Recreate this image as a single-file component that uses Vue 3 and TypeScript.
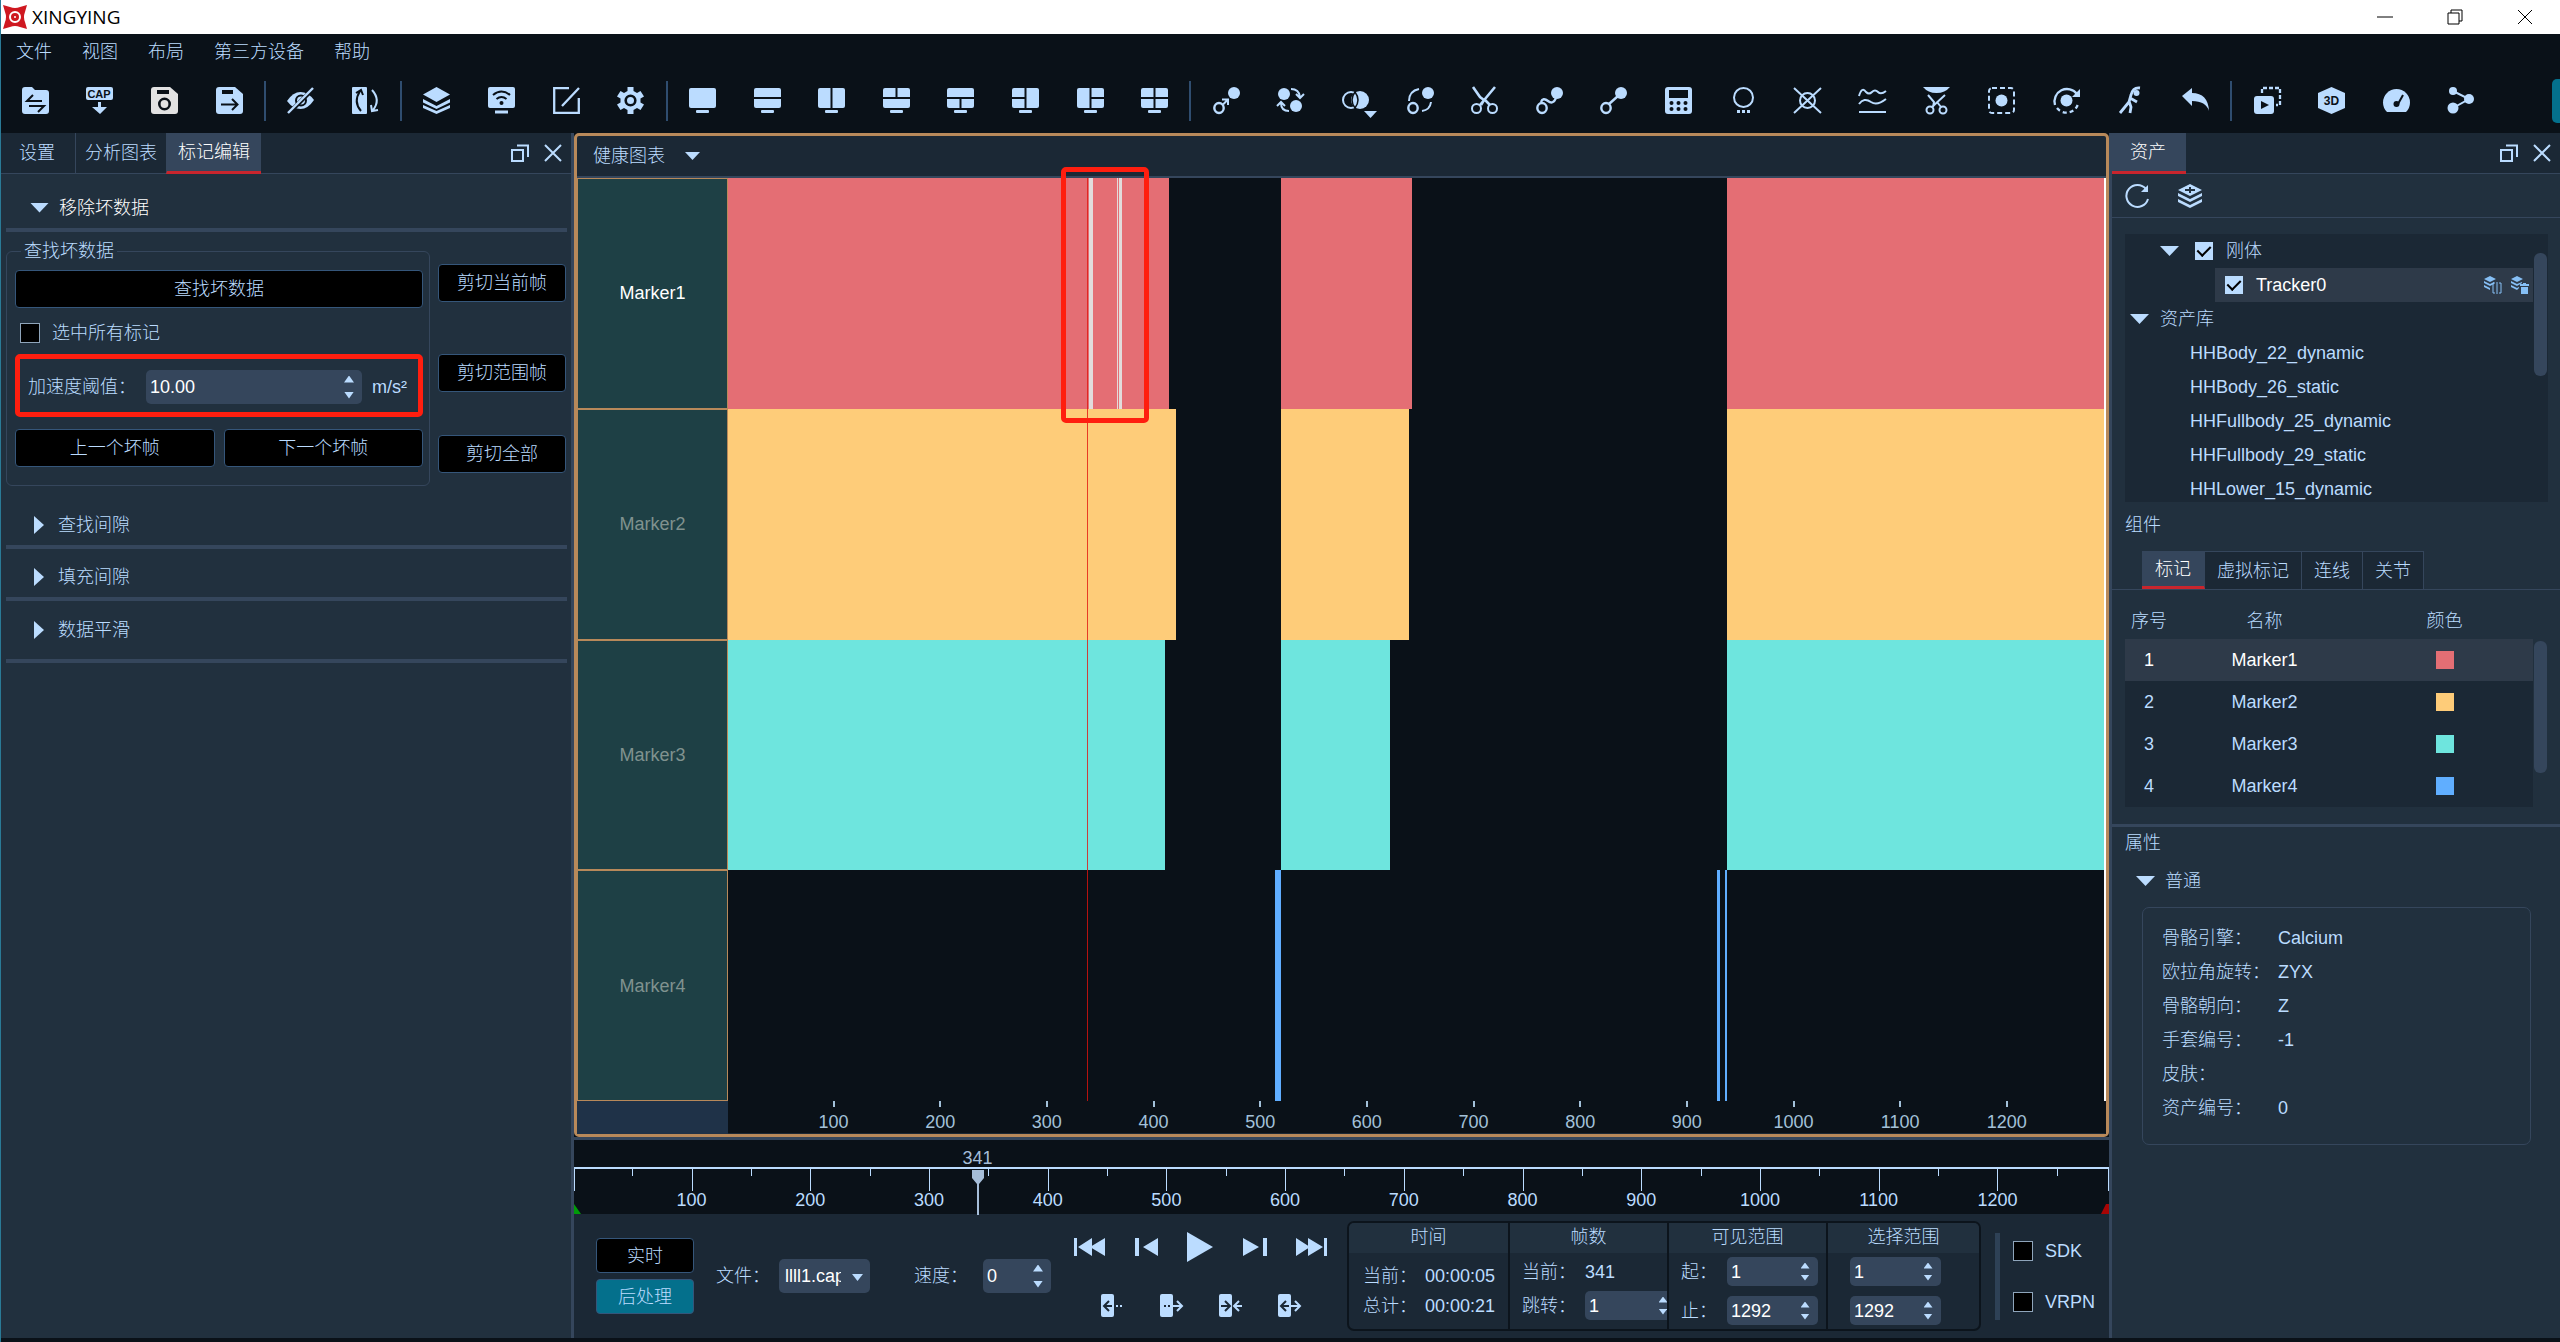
<script setup lang="ts">
import { ref } from 'vue'

interface Icon { name: string; art: string; muted?: boolean }
interface Track { name: string; color: string; spans: [number, number][]; bad?: [number, number][] }

const D = '#0a1118'
const line = 'fill="none" stroke="currentColor" stroke-width="2"'
const dark = `fill="none" stroke="${D}" stroke-width="2"`
const stand = '<rect x="7" y="23" width="13" height="3" rx="1"/>'
const screen = (cuts: string) =>
  `<rect y="1" width="27" height="20" rx="2"/><path d="${cuts}" ${dark}/>${stand}`
const ringAndDot = `<ellipse cx="6" cy="21" rx="4.700" ry="5" fill="none" stroke="currentColor" stroke-width="2.400"/><circle cx="21" cy="6" r="6"/>`

const menus = ['文件', '视图', '布局', '第三方设备', '帮助']

const toolGroups: Icon[][] = [
  [
    { name: '打开', art: `<path d="M0 3q0-3 3-3h7l3 3h11q3 0 3 3v18q0 3-3 3H3q-3 0-3-3z"/><path d="M11 8L5 14h15M7 19h15l-6 6" ${dark}/>` },
    { name: '采集', art: `<rect width="27" height="13" rx="2"/><text x="13" y="11" text-anchor="middle" font-size="11" font-weight="700" font-family="Liberation Sans, sans-serif" fill="${D}">CAP</text><path d="M12 15h3v5h6l-7 7-8-7h6z"/>` },
    { name: '保存', muted: true, art: `<path d="M3 0h16l8 7v17q0 3-3 3H3q-3 0-3-3V3q0-3 3-3z"/><path d="M6 3h12v4H6z" fill="${D}"/><circle cx="13.500" cy="17" r="5.200" fill="none" stroke="${D}" stroke-width="2.600"/>` },
    { name: '另存为', art: `<path d="M3 0h16l8 7v17q0 3-3 3H3q-3 0-3-3V3q0-3 3-3z"/><path d="M6 3h11v4H6z" fill="${D}"/><path d="M5 17.500h16M16 12l5.500 5.500L16 23" ${dark}/>` },
  ],
  [
    { name: '隐藏', art: `<path d="M0 14Q6 5 13.500 5T27 13Q21 22 13.500 22T0 14z"/><circle cx="14" cy="13.500" r="5" ${dark}/><path d="M0 25L25 0l3 3L3 28z" fill="${D}"/><path d="M1 26L26 1" fill="none" stroke="currentColor" stroke-width="2.400"/>` },
    { name: '镜像', art: `<rect width="15" height="27" rx="1"/><path d="M9 24Q1 15 8 4M4 6l5-3 2 5" ${dark}/><path d="M20 3q9 10 1 20M26 23l-6 1-1-6" ${line}/>` },
  ],
  [
    { name: '图层', art: '<path d="M13.500 0L27 7.500 13.500 15 0 7.500z"/><path d="M0 12l13.500 7L27 12v3.500L13.500 22 0 15.500z"/><path d="M0 18l13.500 6L27 18v3L13.500 27 0 21z"/>' },
    { name: '投屏', art: `<rect width="27" height="21" rx="2"/><path d="M5 8q8.500-7 17 0M8.500 12q5-4 10 0" ${dark}/><circle cx="13.500" cy="16" r="2" fill="${D}"/><rect x="7" y="23.500" width="13" height="3"/>` },
    { name: '编辑', art: `<path d="M16 1.200H1.200v24.600h24.600V11M26 1L9 19" fill="none" stroke="currentColor" stroke-width="2.300"/>` },
    { name: '设置', art: `<path d="M10.500 0h6v4l3.500 2 3.500-2 3.500 5.500-3.500 2v4l3.500 2-3.500 5.500-3.500-2-3.500 2v4h-6v-4L7 21l-3.500 2L0 17.500l3.500-2v-4L0 9.500 3.500 4 7 6l3.500-2z"/><circle cx="13.500" cy="13.500" r="4.800" fill="none" stroke="${D}" stroke-width="2.600"/>` },
  ],
  [
    { name: '单窗口', art: screen('') },
    { name: '上下', art: screen('M0 11h27') },
    { name: '左右', art: screen('M13.500 0v22') },
    { name: '上二下一', art: screen('M0 11h27M13.500 0v11') },
    { name: '上一下二', art: screen('M0 11h27M13.500 11v11') },
    { name: '左二右一', art: screen('M13.500 0v22M0 11h13.500') },
    { name: '左一右二', art: screen('M13.500 0v22M13.500 11H27') },
    { name: '四窗口', art: screen('M13.500 0v22M0 11h27') },
  ],
  [
    { name: '识别', art: `${ringAndDot}<path d="M9 12.500h6V18M10 17.500l5-5" ${line}/>` },
    { name: '交换', art: `<circle cx="7" cy="7" r="6"/><circle cx="19" cy="19" r="6"/><path d="M14 2q8 0 9 8M19 7l4 4 4-4M12 24q-8 0-8-8M0 19l4-4 4 4" ${line}/>` },
    { name: '合并', art: `<circle cx="9" cy="13" r="8" ${line}/><circle cx="18" cy="13" r="9"/><path d="M13 5q6 8 0 16q-6-8 0-16z" fill="currentColor" stroke="${D}" stroke-width="1.500"/><path d="M22 24h13l-6.500 7z"/>` },
    { name: '连接', art: `${ringAndDot}<path d="M2 14Q2 4 12 2M24 15q-1 8-9 9" ${line}/>` },
    { name: '剪切', art: `<circle cx="5.500" cy="21.500" r="4.500" ${line}/><circle cx="21.500" cy="21.500" r="4.500" ${line}/><path d="M2 0l7 10 4 3-3 5M24 0L9 18M14 13l5 5" fill="none" stroke="currentColor" stroke-width="2.600"/>` },
    { name: '曲线', art: `${ringAndDot}<path d="M5 15q2-5 7-1q5 4 8-3" fill="none" stroke="currentColor" stroke-width="2.400"/>` },
    { name: '直线', art: `${ringAndDot}<path d="M9 17l9-8" fill="none" stroke="currentColor" stroke-width="2.400"/>` },
    { name: '计算', art: `<rect width="27" height="27" rx="3"/><path d="M4 3h19v8H4z" fill="${D}"/><g fill="${D}"><circle cx="6.500" cy="16" r="2"/><circle cx="13.500" cy="16" r="2"/><circle cx="20.500" cy="16" r="2"/><circle cx="6.500" cy="22" r="2"/><circle cx="13.500" cy="22" r="2"/><circle cx="20.500" cy="22" r="2"/></g>` },
    { name: '预测', art: `<circle cx="13.500" cy="10.500" r="9.500" ${line}/><path d="M7 23h3v3H7zM12 23h3v3h-3zM17 23h3v3h-3z"/>` },
    { name: '删除', art: `<circle cx="13.500" cy="13.500" r="7.500" ${line}/><path d="M0 1l27 25M27 1L0 26" ${line}/>` },
    { name: '平滑', art: `<path d="M0 9Q3-1 7 5q3 3 6 0t6 0 8-1M0 17q5-7 12-2q6 4 15-3M0 25h27" ${line}/>` },
    { name: '裁剪', art: `<path d="M0 0h27q-5 6-13.500 6T0 0z"/><circle cx="7" cy="23" r="3.500" ${line}/><circle cx="20" cy="23" r="3.500" ${line}/><path d="M5 8l6 7-1 5M22 8L9 20M14 15l4 5" ${line}/>` },
    { name: '框选', art: `<rect x="1" y="1" width="25" height="25" rx="3" fill="none" stroke="currentColor" stroke-width="2" stroke-dasharray="5 3"/><circle cx="13.500" cy="13.500" r="6"/>` },
    { name: '旋转', art: `<circle cx="13.500" cy="13.500" r="6"/><path d="M2 18A12.500 12.500 0 0 1 24 7" fill="none" stroke="currentColor" stroke-width="2.300"/><path d="M27 2v8h-8z"/><path d="M4 21a12 12 0 0 0 21-4" fill="none" stroke="currentColor" stroke-width="2.300" stroke-dasharray="4 3"/>` },
    { name: '人体', art: `<circle cx="19.500" cy="6" r="3"/><path d="M23 1q-7-1-9 7l-2 7-9 11M12 14l2 6-1 6M13 11l7 4" fill="none" stroke="currentColor" stroke-width="2.800"/>` },
    { name: '撤销', art: '<path d="M0 9l10-8v5q16 0 17 18q-3-10-17-10v5z"/>' },
  ],
  [
    { name: '复制播放', art: `<rect y="9" width="20" height="18" rx="3"/><path d="M7 14l8 4-8 4z" fill="${D}"/><path d="M8 6V1h18v17h-4" fill="none" stroke="currentColor" stroke-width="2.300" stroke-dasharray="4 2"/>` },
    { name: '三维', art: `<path d="M13.500 0L27 6v15l-13.500 6L0 21V6z"/><text x="13.500" y="18" text-anchor="middle" font-size="12" font-weight="700" font-family="Liberation Sans, sans-serif" fill="${D}">3D</text>` },
    { name: '仪表', art: `<path d="M4 25a13.500 13.500 0 1 1 19 0z"/><path d="M20 8l-5 9" fill="none" stroke="${D}" stroke-width="2"/><circle cx="13.500" cy="17" r="3" fill="${D}"/>` },
    { name: '节点', art: `<circle cx="6" cy="4" r="4"/><circle cx="22" cy="12" r="5"/><circle cx="6" cy="21" r="5.500"/><path d="M6 4l16 8L6 21" ${line}/>` },
  ],
]

const tracks: Track[] = [
  { name: 'Marker1', color: '#e46e74', spans: [[2, 415], [520, 643], [939, 1292]], bad: [[340, 344], [367, 368], [369, 371]] },
  { name: 'Marker2', color: '#fecc79', spans: [[2, 422], [520, 640], [939, 1292]] },
  { name: 'Marker3', color: '#6ee5de', spans: [[2, 412], [520, 623], [939, 1292]] },
  { name: 'Marker4', color: '#60aeff', spans: [[515, 520], [929, 932], [937, 939]] },
]
const hundreds = Array.from({ length: 12 }, (_, i) => (i + 1) * 100)
const fifties = Array.from({ length: 13 }, (_, i) => i * 100 + 50)
const plotX = (f: number) => `${((f - 2) / 1290) * 100}%`
const plotSpan = (a: number, b: number) => ({ left: plotX(a), width: `${((b - a) / 1290) * 100}%` })
const timeX = (f: number) => ({ left: `${((f - 1) / 1293) * 100}%` })

const library = ['HHBody_22_dynamic', 'HHBody_26_static', 'HHFullbody_25_dynamic', 'HHFullbody_29_static', 'HHLower_15_dynamic']
const partTabs = ['标记', '虚拟标记', '连线', '关节']
const properties = [
  ['骨骼引擎：', 'Calcium'], ['欧拉角旋转：', 'ZYX'], ['骨骼朝向：', 'Z'],
  ['手套编号：', '-1'], ['皮肤：', ''], ['资产编号：', '0'],
]
const transport = [
  { name: '首帧', w: 31, art: '<path d="M0 0h3v18H0zM18 0v18L4 9zM31 0v18L16 9z"/>' },
  { name: '上一帧', w: 23, art: '<path d="M0 0h4v18H0zM23 0v18L8 9z"/>' },
  { name: '播放', w: 26, art: '<path d="M0-6l26 15L0 24z"/>' },
  { name: '下一帧', w: 24, art: '<path d="M0 0v18L16 9zM20 0h4v18h-4z"/>' },
  { name: '末帧', w: 31, art: '<path d="M0 0v18L14 9zM12 0v18L27 9zM28 0h3v18h-3z"/>' },
]
const half = '<rect width="13" height="23" rx="2"/>'
const ink = 'fill="none" stroke="#1b2835" stroke-width="2"'
const trims = [
  { name: '向前选择', art: `${half}<path d="M11 12H3M8 7l-5 5 5 5" ${ink}/><path d="M15 11h2v2h-2zM19 11h2v2h-2z"/>` },
  { name: '向后选择', art: `${half}<path d="M4 11h2v2H4zM8 11h2v2H8z" fill="#1b2835"/><path d="M13 12h8M17 7l5 5-5 5" ${line}/>` },
  { name: '向内收缩', art: `${half}<path d="M2 12h8M6 7l5 5-5 5" ${ink}/><path d="M23 12h-7M20 7l-5 5 5 5" ${line}/>` },
  { name: '向外扩展', art: `${half}<path d="M11 12H3M8 7l-5 5 5 5" ${ink}/><path d="M13 12h8M17 7l5 5-5 5" ${line}/>` },
]

const threshold = ref('10.00')
const file = ref('llll1.cap')
const speed = ref(0)
const jump = ref(1)
const visible = ref([1, 1292])
const selected = ref([1, 1292])
</script>

<template>
  <div class="app">
    <header class="titlebar">
      <svg class="logo" viewBox="0 0 24 24">
        <path d="M0 0l7 2q5 2 10 0l7-2-2 7q-2 5 0 10l2 7-7-2q-5-2-10 0l-7 2 2-7q2-5 0-10z" fill="#cf1820" />
        <circle cx="12" cy="12" r="5" fill="none" stroke="#fff" stroke-width="2" />
        <circle cx="12" cy="12" r="1" fill="#fff" />
      </svg>
      <span class="app-name">XINGYING</span>
      <div class="win-buttons">
        <button aria-label="最小化"><svg viewBox="0 0 16 16"><path d="M0 8h16" /></svg></button>
        <button aria-label="还原"><svg viewBox="0 0 16 16"><path d="M1 4h11v11H1zM4 4V1h11v11h-3" /></svg></button>
        <button aria-label="关闭"><svg viewBox="0 0 16 16"><path d="M1 1l14 14M15 1L1 15" /></svg></button>
      </div>
    </header>

    <nav class="menubar">
      <button v-for="m in menus" :key="m">{{ m }}</button>
    </nav>

    <div class="toolbar">
      <template v-for="(g, gi) in toolGroups" :key="gi">
        <i v-if="gi" class="tool-sep"></i>
        <button v-for="t in g" :key="t.name" class="tool" :class="{ muted: t.muted }" :aria-label="t.name">
          <svg viewBox="0 0 27 27" v-html="t.art"></svg>
        </button>
      </template>
      <button class="side-handle" aria-label="展开"></button>
    </div>

    <main class="workspace">
      <section class="left">
        <div class="dock-head">
          <button class="tab first">设置</button>
          <button class="tab">分析图表</button>
          <button class="tab active">标记编辑</button>
          <div class="dock-actions">
            <button aria-label="浮动"><svg viewBox="0 0 18 18"><path d="M1 6h11v11H1zM6 1.500h11V13" /></svg></button>
            <button aria-label="关闭"><svg viewBox="0 0 18 18"><path d="M1 1l16 16M17 1L1 17" /></svg></button>
          </div>
        </div>

        <h3 class="fold open"><i class="tri down"></i>移除坏数据</h3>
        <div class="bad-data">
          <fieldset>
            <legend>查找坏数据</legend>
            <button class="btn">查找坏数据</button>
            <label class="check"><input type="checkbox" />选中所有标记</label>
            <div class="threshold">
              <label for="threshold">加速度阈值：</label>
              <span class="spin">
                <input id="threshold" v-model="threshold" type="text" inputmode="decimal" />
                <span class="steps"><button aria-label="增加"></button><button aria-label="减少"></button></span>
              </span>
              <span class="unit">m/s²</span>
            </div>
            <div class="pair">
              <button class="btn">上一个坏帧</button>
              <button class="btn">下一个坏帧</button>
            </div>
          </fieldset>
          <div class="cuts">
            <button class="btn">剪切当前帧</button>
            <button class="btn">剪切范围帧</button>
            <button class="btn">剪切全部</button>
          </div>
        </div>
        <h3 class="fold gaps"><i class="tri right-tri"></i>查找间隙</h3>
        <h3 class="fold fill"><i class="tri right-tri"></i>填充间隙</h3>
        <h3 class="fold smooth"><i class="tri right-tri"></i>数据平滑</h3>
      </section>

      <section class="center">
        <div class="frame">
          <button class="chart-head">健康图表<i class="tri small"></i></button>
          <div class="chart">
            <div class="names">
              <div v-for="(t, i) in tracks" :key="t.name" class="name" :class="{ on: i === 0 }">{{ t.name }}</div>
            </div>
            <div class="plot">
              <div v-for="t in tracks" :key="t.name" class="lane">
                <i v-for="s in t.spans" :key="s[0]" class="span" :style="{ ...plotSpan(s[0], s[1]), background: t.color }"></i>
                <i v-for="b in t.bad" :key="b[0]" class="span bad" :style="plotSpan(b[0], b[1])"></i>
              </div>
              <i class="cursor" :style="{ left: plotX(339) }"></i>
              <i class="callout"></i>
            </div>
            <div class="axis-pad"></div>
            <div class="axis">
              <span v-for="n in hundreds" :key="n" :style="{ left: plotX(n) }">{{ n }}</span>
            </div>
          </div>
        </div>

        <div class="timeline">
          <div class="rule">
            <i class="tick major" :style="timeX(1)"></i>
            <i v-for="n in fifties" :key="n" class="tick" :style="timeX(n)"></i>
            <i v-for="n in hundreds" :key="n" class="tick major" :style="timeX(n)"></i>
            <i class="tick major" :style="timeX(1293)"></i>
            <span v-for="n in hundreds" :key="'n' + n" class="num" :style="timeX(n)">{{ n }}</span>
            <div class="playhead" :style="timeX(341)">
              <span>341</span>
              <svg viewBox="0 0 14 45"><path d="M1 0h12v8l-5 6v31H6V14L1 8z" /></svg>
            </div>
            <svg class="limit start" viewBox="0 0 8 10"><path d="M0 0l7 10H0z" fill="#009b08" /></svg>
            <svg class="limit end" viewBox="0 0 8 10"><path d="M8 0v10H0l5-10z" fill="#a80404" /></svg>
          </div>
        </div>

        <div class="controls">
          <div class="modes">
            <button class="btn">实时</button>
            <button class="btn teal">后处理</button>
          </div>
          <label for="file" class="lbl">文件：</label>
          <span class="pick">
            <select id="file" v-model="file"><option>llll1.cap</option></select>
            <i class="tri mini"></i>
          </span>
          <label for="speed" class="lbl speed">速度：</label>
          <span class="spin speed-spin">
            <input id="speed" v-model="speed" type="text" />
            <span class="steps"><button aria-label="增加"></button><button aria-label="减少"></button></span>
          </span>

          <div class="transport">
            <div class="play-row">
              <button v-for="t in transport" :key="t.name" :aria-label="t.name" :style="{ width: t.w + 'px' }">
                <svg :viewBox="`0 0 ${t.w} 18`" v-html="t.art"></svg>
              </button>
            </div>
            <div class="trim-row">
              <button v-for="t in trims" :key="t.name" :aria-label="t.name"><svg viewBox="0 0 22 23" v-html="t.art"></svg></button>
            </div>
          </div>

          <div class="ranges">
            <div class="range time">
              <h4>时间</h4>
              <div class="row"><span>当前：</span><output>00:00:05</output></div>
              <div class="row"><span>总计：</span><output>00:00:21</output></div>
            </div>
            <div class="range frames">
              <h4>帧数</h4>
              <div class="row"><span>当前：</span><output>341</output></div>
              <div class="row">
                <label for="jump">跳转：</label>
                <span class="spin"><input id="jump" v-model="jump" type="text" /><span class="steps"><button aria-label="增加"></button><button aria-label="减少"></button></span></span>
              </div>
            </div>
            <div class="range view">
              <h4>可见范围</h4>
              <div v-for="(n, i) in ['起：', '止：']" :key="n" class="row">
                <label :for="'vis' + i">{{ n }}</label>
                <span class="spin"><input :id="'vis' + i" v-model="visible[i]" type="text" /><span class="steps"><button aria-label="增加"></button><button aria-label="减少"></button></span></span>
              </div>
            </div>
            <div class="range pickrange">
              <h4>选择范围</h4>
              <div v-for="(n, i) in ['起', '止']" :key="n" class="row">
                <span class="spin"><input v-model="selected[i]" type="text" :aria-label="n" /><span class="steps"><button aria-label="增加"></button><button aria-label="减少"></button></span></span>
              </div>
            </div>
          </div>
          <i class="bar"></i>
          <div class="streams">
            <label class="check"><input type="checkbox" />SDK</label>
            <label class="check"><input type="checkbox" />VRPN</label>
          </div>
        </div>
      </section>

      <aside class="right">
        <div class="dock-head">
          <button class="tab active asset">资产</button>
          <div class="dock-actions">
            <button aria-label="浮动"><svg viewBox="0 0 18 18"><path d="M1 6h11v11H1zM6 1.500h11V13" /></svg></button>
            <button aria-label="关闭"><svg viewBox="0 0 18 18"><path d="M1 1l16 16M17 1L1 17" /></svg></button>
          </div>
        </div>
        <div class="asset-tools">
          <button aria-label="刷新">
            <svg viewBox="0 0 24 24"><path d="M21 5A11 11 0 1 0 23 15" fill="none" stroke="currentColor" stroke-width="2" /><path d="M23 1v7h-7z" /></svg>
          </button>
          <button aria-label="添加资产">
            <svg viewBox="0 0 24 24"><path d="M12 0l12 6-12 6L0 6zM0 9l12 6 12-6v3l-12 6L0 12zM0 15l12 6 12-6v3l-12 6-12-6z" /><path d="M12 3v6M7 6h10" stroke="#21303e" stroke-width="2" /></svg>
          </button>
        </div>

        <div class="tree">
          <ul>
            <li class="lv1"><i class="tri down"></i><label class="check"><input type="checkbox" checked />刚体</label></li>
            <li class="lv2">
              <label class="check"><input type="checkbox" checked />Tracker0</label>
              <span class="item-tools">
                <button aria-label="重命名"><svg viewBox="0 0 18 18"><path d="M6 0l6 3-6 3-6-3zM0 5l6 3 4-2v2l-4 2-6-3zM0 9l6 3v2l-6-3z" /><path d="M11 7H9v10h2M15 7h2v10h-2M13 6v12" fill="none" stroke="currentColor" /></svg></button>
                <button aria-label="删除"><svg viewBox="0 0 18 18"><path d="M6 0l6 3-6 3-6-3zM0 5l6 3 5-2v1l-5 3-6-3zM0 9l6 3 2-1v1l-2 2-6-3zM9 8h3V7h3v1h3v2H9zM10 11h7v7h-7z" /></svg></button>
              </span>
            </li>
            <li class="lv0"><i class="tri down"></i>资产库</li>
            <li v-for="n in library" :key="n" class="leaf">{{ n }}</li>
          </ul>
          <i class="thumb"></i>
        </div>

        <h3 class="cap">组件</h3>
        <div class="part-tabs">
          <button v-for="(t, i) in partTabs" :key="t" :class="{ active: i === 0 }">{{ t }}</button>
        </div>
        <div class="markers">
          <table>
            <thead><tr><th class="c1">序号</th><th class="c2">名称</th><th>颜色</th></tr></thead>
            <tbody>
              <tr v-for="(t, i) in tracks" :key="t.name" :class="{ on: i === 0 }">
                <td>{{ i + 1 }}</td><td>{{ t.name }}</td><td><i class="swatch" :style="{ background: t.color }"></i></td>
              </tr>
            </tbody>
          </table>
          <i class="thumb"></i>
        </div>

        <h3 class="cap props">属性</h3>
        <h4 class="common"><i class="tri down"></i>普通</h4>
        <dl>
          <template v-for="p in properties" :key="p[0]"><dt>{{ p[0] }}</dt><dd>{{ p[1] }}</dd></template>
        </dl>
      </aside>
    </main>
  </div>
</template>

<style>
body { margin: 0; background: #0a1118; }
</style>

<style scoped>
* { box-sizing: border-box; }
.app {
  min-height: 100vh; display: flex; flex-direction: column; padding-bottom: 4px;
  background: #0a1118; color: #bbdcff; border-left: 1px solid #2a7a96;
  font: 300 18px/24px "Liberation Sans", "Noto Sans CJK SC", sans-serif;
}
button, input, select { font: inherit; color: inherit; }
button { padding: 0; border: 0; background: none; display: block; }
h3, h4, ul, dl, dd { margin: 0; padding: 0; font-weight: 300; font-size: 18px; list-style: none; }
i { display: block; flex: none; }
svg { display: block; overflow: visible; fill: currentColor; }

.titlebar { height: 34px; background: #fff; color: #000; display: flex; align-items: center; padding-left: 2px; }
.logo { width: 24px; height: 24px; }
.app-name { margin-left: 5px; font: 19px/24px "Open Sans", "Noto Sans", sans-serif; }
.win-buttons { margin-left: auto; display: flex; gap: 54px; padding-right: 27px; }
.win-buttons svg { width: 16px; height: 16px; fill: none; stroke: #000; stroke-width: 1; }

.menubar { height: 36px; display: flex; align-items: center; gap: 30px; padding-left: 15px; }

.toolbar { height: 63px; display: flex; align-items: center; padding: 0 0 2px 2px; }
.tool { flex: 1; display: flex; justify-content: center; }
.tool svg { width: 27px; height: 27px; }
.tool.muted { color: #e2e2e2; }
.tool-sep { width: 7px; height: 40px; background: linear-gradient(#2f4d6f, #2f4d6f) center / 2px 100% no-repeat; }
.side-handle { width: 8px; height: 44px; margin-left: 59px; background: #04708c; border-radius: 5px 0 0 5px; }

.workspace { flex: 1; display: grid; grid-template-columns: 573px 1fr 451px; }
.left { background: #21303e; border-right: 3px solid #35465c; }
.right { background: #21303e; border-left: 3px solid #35465c; }
.dock-head { height: 41px; display: flex; background: #1b2835; border-bottom: 1px solid #35465c; }
.tab { padding: 0 9px; border-left: 1px solid #35465c; height: 40px; }
.tab.first { padding: 0 20px 0 18px; border: 0; }
.tab.active { background: #35465c; color: #fff; padding: 0 11px; height: 41px; border-bottom: 3px solid #c9252d; }
.tab.asset { padding: 0 20px 0 18px; border-left: 0; }
.dock-actions { margin-left: auto; display: flex; align-items: center; gap: 15px; padding-right: 9px; }
.dock-actions svg { width: 18px; height: 18px; fill: none; stroke: currentColor; stroke-width: 2; }

.tri { width: 19px; height: 10px; background: #bbdcff; clip-path: polygon(0 0, 100% 0, 50% 100%); }
.tri.right-tri { width: 10px; height: 18px; clip-path: polygon(0 0, 100% 50%, 0 100%); margin: 0 4px; }
.tri.small { width: 15px; height: 8px; }
.tri.mini { width: 11px; height: 7px; }

.fold { display: flex; align-items: center; gap: 10px; margin: 0 4px 0 5px; padding-left: 24px; border-bottom: 4px solid #35465c; }
.fold.open { color: #fff; height: 58px; padding-top: 13px; }
.fold.gaps { height: 63px; padding-top: 19px; }
.fold.fill { height: 52px; padding-top: 8px; }
.fold.smooth { height: 62px; }

.bad-data { display: flex; gap: 8px; padding: 9px 5px 0; }
fieldset { flex: 1; min-width: 0; margin: 0; padding: 9px 6px 18px 8px; border: 1px solid #35465c; border-radius: 6px; }
legend { margin-left: 6px; padding: 0 3px; line-height: 20px; }
.btn { height: 38px; width: 100%; background: #000; border: 1px solid #35567a; border-radius: 4px; }
.check { display: flex; align-items: center; gap: 12px; }
.check input { appearance: none; margin: 0; width: 20px; height: 20px; background: #000; border: 1px solid #8fa5bb; }
.check input:checked { width: 18px; height: 18px; border: 0; background: #bbdcff; display: flex; justify-content: center; }
.check input:checked::before { content: ""; width: 6px; height: 11px; margin-top: 1px; border: solid #000; border-width: 0 2px 2px 0; rotate: 45deg; }
fieldset .check { margin: 14px 0 11px 5px; height: 21px; }
.threshold { height: 63px; border: 5px solid #ff1e0f; border-radius: 5px; display: flex; align-items: center; padding: 3px 0 0 8px; }
.threshold label { width: 118px; }
.threshold .spin { width: 216px; height: 34px; }
.unit { margin-left: 10px; }
.pair { display: flex; gap: 9px; margin-top: 12px; }
.cuts { width: 128px; padding-top: 23px; display: grid; grid-template-rows: 90px 81px 38px; align-content: start; }

.spin { display: flex; background: #35465c; border-radius: 5px; color: #fff; overflow: hidden; flex: none; }
.spin input { flex: 1; min-width: 0; width: 0; border: 0; padding: 0 0 0 4px; background: none; }
.steps { width: 26px; display: flex; flex-direction: column; justify-content: center; align-items: center; gap: 9px; }
.steps button { width: 10px; height: 7px; background: #bbdcff; clip-path: polygon(50% 0, 100% 100%, 0 100%); }
.steps button + button { clip-path: polygon(0 0, 100% 0, 50% 100%); }

.center { min-width: 0; display: flex; flex-direction: column; }
.frame { flex: 1; display: flex; flex-direction: column; border: 3px solid #b8895a; border-radius: 5px; background: #1b2835; }
.chart-head { display: flex; align-items: center; gap: 20px; height: 42px; padding-left: 16px; border-bottom: 2px solid #35465c; text-align: left; }
.chart { flex: 1; display: grid; grid-template-columns: 151px 1fr; grid-template-rows: 1fr 33px; }
.names { display: grid; grid-auto-rows: 1fr; color: #80928f; }
.name { display: flex; align-items: center; justify-content: center; background: #1e4045; border: 1px solid #b8895a; }
.name.on { color: #fff; }
.plot { position: relative; display: grid; grid-auto-rows: 1fr; background: #0a1118; border-right: 2px solid #fff; }
.lane { position: relative; }
.span { position: absolute; top: 0; bottom: 0; }
.bad { background: #e2dcdc; }
.cursor { position: absolute; top: 0; bottom: 0; width: 1px; background: rgba(225, 20, 15, .8); }
.callout { position: absolute; left: 24.200%; width: 88px; top: -11px; height: 256px; border: 5px solid #ff1e0f; border-radius: 5px; }
.axis-pad { background: #1f3248; }
.axis { position: relative; background: #0a1118; border-right: 2px solid #0a1118; border-bottom: 1px solid #1b2835; color: #a3c1d9; }
.axis span { position: absolute; top: 0; width: 60px; margin-left: -29px; padding-top: 9px; text-align: center; background: linear-gradient(#a3c1d9, #a3c1d9) center top / 2px 6px no-repeat; }

.timeline { height: 77px; border-top: 3px solid #35465c; background: #0a1118; padding-top: 27px; }
.rule { position: relative; height: 47px; border-top: 2px solid #bbdcff; }
.tick { position: absolute; top: 0; width: 1px; height: 7px; background: #bbdcff; }
.tick.major { height: 22px; }
.num { position: absolute; top: 19px; width: 60px; margin-left: -30px; text-align: center; }
.playhead { position: absolute; top: -23px; width: 40px; margin-left: -20px; color: #a5bdd8; text-align: center; }
.playhead span { display: block; height: 24px; }
.playhead svg { width: 14px; height: 45px; margin: 0 auto; }
.limit { position: absolute; bottom: 0; width: 8px; height: 10px; }
.limit.start { left: 0; }
.limit.end { right: 0; }

.controls { height: 124px; background: #1b2835; display: flex; align-items: center; padding-left: 22px; }
.modes { width: 98px; display: grid; gap: 6px; flex: none; }
.modes .btn { height: 35px; }
.btn.teal { background: #04708c; }
.lbl { margin-left: 22px; width: 63px; flex: none; }
.lbl.speed { margin-left: 44px; width: 69px; }
.pick { position: relative; display: flex; width: 91px; height: 34px; flex: none; }
.pick select { appearance: none; width: 100%; border: 0; border-radius: 5px; background: #35465c; color: #fff; padding: 0 29px 0 6px; outline: 0; }
.pick .tri { position: absolute; right: 7px; top: 15px; }
.speed-spin { width: 68px; height: 34px; }
.transport { width: 253px; margin: 0 0 3px 23px; display: grid; gap: 32px; flex: none; }
.play-row, .trim-row { display: flex; justify-content: space-between; align-items: center; height: 30px; }
.play-row svg { height: 18px; width: 100%; }
.trim-row { height: 23px; padding: 0 27px; }
.trim-row svg { width: 22px; height: 23px; }
.ranges { width: 634px; height: 110px; margin-left: 20px; flex: none; display: grid; grid-template-columns: 159px 159px 159px 1fr; border: 2px solid #0c141c; border-radius: 7px; overflow: hidden; }
.range { overflow: hidden; }
.range + .range { border-left: 2px solid #0c141c; }
.range h4 { height: 30px; line-height: 28px; text-align: center; background: #21303e; margin-bottom: 4px; }
.row { height: 29px; display: flex; align-items: center; }
.row .spin { width: 91px; height: 29px; }
.row .steps { gap: 6px; }
.row .steps button { width: 9px; height: 6px; }
.time .row { padding-left: 14px; height: 30px; }
.time h4 { margin-bottom: 8px; }
.time span { width: 62px; flex: none; }
.frames .row { padding-left: 12px; margin-bottom: 5px; }
.frames .row > :first-child { width: 63px; flex: none; }
.view .row { padding-left: 12px; margin-bottom: 10px; }
.view label { width: 46px; }
.pickrange .row { padding-left: 22px; margin-bottom: 10px; }
.bar { width: 5px; height: 87px; margin: 0 13px 0 14px; background: #2e4156; }
.streams { display: grid; gap: 31px; }
.streams .check { height: 20px; }

.asset-tools { height: 44px; display: flex; align-items: center; gap: 29px; padding-left: 13px; border-bottom: 1px solid #35465c; }
.asset-tools svg { width: 24px; height: 24px; }
.tree { height: 268px; margin: 16px 12px 0 13px; background: #1b2835; display: flex; overflow: hidden; }
.tree ul { flex: 1; }
.tree li { height: 34px; display: flex; align-items: center; gap: 11px; }
.tree .check { gap: 13px; }
.lv0 { padding-left: 5px; }
.lv1 { padding-left: 35px; }
.lv1 .tri { margin-right: 5px; }
.tree .lv2 { margin-left: 90px; padding-left: 10px; background: #2e3a49; color: #fff; }
.item-tools { margin-left: auto; padding-right: 4px; display: flex; gap: 9px; color: #86bff5; }
.item-tools svg { width: 18px; height: 18px; }
.leaf { padding-left: 65px; }
.thumb { width: 13px; border-radius: 6px; background: #35465c; margin: 19px 1px 0; height: 123px; }
.cap { padding: 11px 0 0 13px; height: 49px; }
.part-tabs { display: flex; padding-left: 30px; height: 39px; border-bottom: 1px solid #35465c; }
.part-tabs button { padding: 0 12px; border: solid #35465c; border-width: 1px 1px 0 0; background: #1b2835; }
.part-tabs .active { background: #35465c; color: #fff; border-bottom: 3px solid #c9252d; padding: 0 13px; }
.markers { display: flex; margin: 12px 12px 13px 13px; }
table { flex: 1; border-collapse: collapse; table-layout: fixed; margin-bottom: 4px; }
th { height: 37px; font-weight: 300; padding: 0; }
.c1 { width: 48px; }
.c2 { width: 183px; }
td { height: 42px; padding: 0; text-align: center; background: #1b2835; }
tr.on td { background: #2e3a49; color: #fff; }
.swatch { width: 18px; height: 18px; margin: 0 auto; }
.markers .thumb { height: 132px; margin-top: 39px; }
.cap.props { border-top: 3px solid #35465c; padding-top: 4px; height: 40px; }
.common { display: flex; align-items: center; gap: 10px; padding-left: 24px; height: 34px; }
dl { margin: 9px 29px 0 30px; padding: 13px 19px 19px; border: 1px solid #35465c; border-radius: 7px; display: grid; grid-template-columns: 116px 1fr; grid-auto-rows: 34px; align-items: center; }
</style>
